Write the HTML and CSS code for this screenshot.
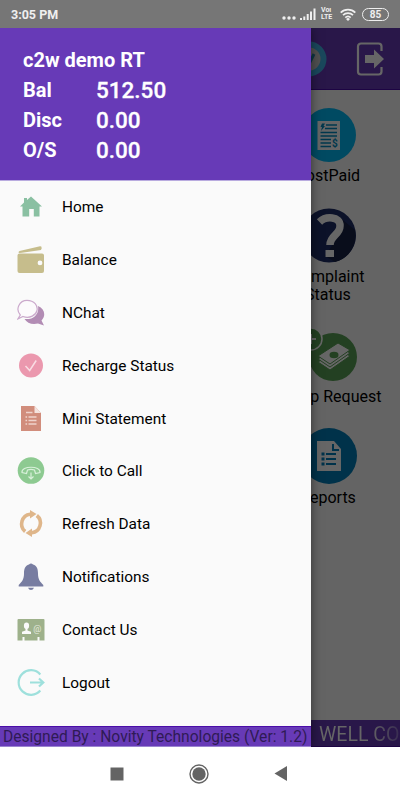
FILE: index.html
```html
<!DOCTYPE html>
<html lang="en">
<head>
    <meta charset="UTF-8">
    <meta name="viewport" content="width=device-width, initial-scale=1.0">
    <title>c2w demo RT</title>
    <link rel="stylesheet" href="styles.css">
</head>
<body>
    <div class="status-bar">
        <span class="time">3:05 PM</span>
        <svg class="dots" width="14" height="4" viewBox="0 0 14 4"><circle cx="2" cy="2" r="1.7"/><circle cx="7" cy="2" r="1.7"/><circle cx="12" cy="2" r="1.7"/></svg>
        <svg class="signal" width="16" height="12" viewBox="0 0 16 12"><path d="M0 10h2v2H0zM3.300 8.500h2V12h-2zM6.700 6h2v6h-2zM10 3.500h2V12h-2zM13.500 0.500h2V12h-2z"/></svg>
        <span class="volte"><span>Voı</span><span>LTE</span></span>
        <svg class="wifi" width="16" height="13" viewBox="0 0 16 13"><g fill="none" stroke="#efefef" stroke-width="1.700"><path d="M.7 4.600a10.500 10.500 0 0 1 14.600 0"/><path d="M3 7.200a7.200 7.200 0 0 1 10 0"/><path d="M5.300 9.600a4 4 0 0 1 5.400 0"/></g><path d="M8 9.700l2 1.400-2 1.900-2-1.900z"/></svg>
        <span class="battery"><b>85</b></span>
    </div>

    <div class="app">
        <div class="toolbar">
            <svg width="36" height="36" viewBox="0 0 36 36"><circle cx="18" cy="18" r="14.500" fill="#c8c8c8" stroke="#42b4e6" stroke-width="6"/><path d="M11 18l6 7 6-12" fill="none" stroke="#2785ae" stroke-width="3"/></svg>
            <svg width="29" height="36" viewBox="0 0 29 36"><path d="M25.500 10V5.500a3 3 0 0 0-3-3H5a3 3 0 0 0-3 3v25a3 3 0 0 0 3 3h17.500a3 3 0 0 0 3-3V26" fill="none" stroke="#fff" stroke-width="2.200"/><path d="M9 14h9V8.500l10 9.500-10 9.500V22H9z" fill="#fff"/></svg>
        </div>

        <div class="tiles">
            <div class="tile postpaid">
                <svg width="54" height="54" viewBox="0 0 54 54"><circle cx="27" cy="27" r="27" fill="#00b8f5"/><path d="M15.500 13H38v29H15.500z" fill="#fff"/><path d="M24 17h11M23 20.500h12M18.500 24.500H35M18.500 28H35M18.500 31.500H29M18.500 35H29M18.500 38.500H29" stroke="#008bc0" stroke-width="1.400"/><path d="M20 15.500h3l-1.500 2.500H23l-4 5 1-4h-1.500z" fill="#008bc0"/><text x="30" y="39" font-size="10" font-weight="700" fill="#008bc0">$</text></svg>
                <span>PostPaid</span>
            </div>
            <div class="tile complaint">
                <svg width="54" height="55" viewBox="0 0 54 55"><circle cx="27" cy="27.500" r="27" fill="#1e2d68"/><path d="M36 8l17 14c3 14-6 29-20 32L23 48l8-12z" fill="#172145"/><path d="M17.500 14c6-6 21-6 20.500 4 0 9-10 9-10 19" fill="none" stroke="#fff" stroke-width="7.500"/><path d="M23.500 42h8.500v7h-8.500z" fill="#fff"/></svg>
                <span>Complaint<br>Status</span>
            </div>
            <div class="tile topup">
                <svg width="62" height="54" viewBox="0 0 62 54"><circle cx="35" cy="30" r="24" fill="#58a055"/><g fill="#fff" stroke="#58a055" stroke-width="1"><path d="M20 35l20-13 12 7-20 14z"/><path d="M20 32l20-13 12 7-20 14z"/><path d="M20 29l20-13 12 7-20 14z"/></g><ellipse cx="36" cy="28" rx="4.500" ry="3.200" fill="#58a055"/><circle cx="13" cy="12" r="11" fill="#58a055" stroke="#fff" stroke-width="1.500"/><path d="M8 12h10M13 7v10" stroke="#fff" stroke-width="2"/></svg>
                <span>Topup Request</span>
            </div>
            <div class="tile reports">
                <svg width="56" height="56" viewBox="0 0 56 56"><circle cx="28" cy="28" r="28" fill="#007db8"/><path d="M16 13h17l7 8v22H16z" fill="#fff"/><path d="M32 16v6h6" fill="none" stroke="#007db8" stroke-width="2"/><path d="M25 26h10M25 31h10M25 36h10" stroke="#007db8" stroke-width="1.800"/><path d="M20.500 26h3M20.500 31h3M20.500 36h3" stroke="#007db8" stroke-width="3"/></svg>
                <span>Reports</span>
            </div>
        </div>

        <div class="ticker">WELL CO</div>
        <div class="scrim"></div>

        <div class="drawer">
            <div class="account">
                <div class="name">c2w demo RT</div>
                <div class="line"><span>Bal</span><b>512.50</b></div>
                <div class="line"><span>Disc</span><b>0.00</b></div>
                <div class="line"><span>O/S</span><b>0.00</b></div>
            </div>
            <ul class="menu">
                <li>
                    <svg viewBox="0 0 28 28"><path d="M14 3.500l11 10h-2.500V23.500h-5.700v-7.500h-4.600v7.500H5.500v-10H3l4-4V5h3v2z" fill="#8ac0a2"/></svg>
                    Home
                </li>
                <li>
                    <svg viewBox="0 0 28 28"><path d="M2.500 7q-2-.5 0-2L23 .3q2-.3 1.600 2L24 4 5 6.700z" fill="#c6bd8c"/><path fill-rule="evenodd" d="M2.500 7.500H25a2 2 0 0 1 2 2v15.500a2 2 0 0 1-2 2H2.500a2 2 0 0 1-2-2V9.500a2 2 0 0 1 2-2zm20.500 7a2.400 2.400 0 1 0 0 4.800 2.400 2.400 0 0 0 0-4.800z" fill="#c6bd8c"/></svg>
                    Balance
                </li>
                <li>
                    <svg viewBox="0 0 28 28"><path d="M21 7c7 3 8 10 3.500 14.500L27 26.500l-6-2c-6 1.500-11-.5-13.500-4.500 9 1 15-5 13.500-13z" fill="#b28cb4"/><path d="M3.300 16C-2 10 2.500 1.300 10 1.300S21 7 20 11.500 13 20 6 17.500L.8 20z" fill="#fcfafc" stroke="#cba9cc" stroke-width="1.200"/></svg>
                    NChat
                </li>
                <li>
                    <svg viewBox="0 0 28 28"><circle cx="14" cy="13.500" r="12" fill="#eb98ae"/><path d="M8.500 14l4.200 4.500 6.500-10" fill="none" stroke="#f9dce3" stroke-width="1.500"/></svg>
                    Recharge Status
                </li>
                <li>
                    <svg viewBox="0 0 28 28"><path d="M4 1h13.500L24 8v18H4z" fill="#d18d7c"/><path d="M17.500 1L24 8h-6.500z" fill="#f4e3df"/><path d="M9 7.500h6.500M11.500 12h8M11.500 15.500h8M11.500 19h8M8.500 12h1.600M8.500 15.500h1.600M8.500 19h1.600" stroke="#efd3cc" stroke-width="1.500"/></svg>
                    Mini Statement
                </li>
                <li>
                    <svg viewBox="0 0 28 28"><circle cx="14" cy="13.500" r="13.300" fill="#8dca91"/><path d="M5 15.500c-1-7 19-7 18 0l-4.500 1-1-3.500c-2-.8-5-.8-7 0l-1 3.500zM14 15.500V22M11.500 19.500L14 22l2.500-2.500" fill="none" stroke="#d8f0da" stroke-width="1.200"/></svg>
                    Click to Call
                </li>
                <li>
                    <svg viewBox="0 0 28 28"><g fill="none" stroke="#dfb68a" stroke-width="3.600"><path d="M8.200 21.500a9.800 9.800 0 0 1 5-17.300"/><path d="M19.800 5.500a9.800 9.800 0 0 1-5 17.300"/></g><path d="M13 0l6.500 4-6.500 4.500zM15 27l-6.500-4 6.500-4.500z" fill="#dfb68a"/></svg>
                    Refresh Data
                </li>
                <li>
                    <svg viewBox="0 0 28 28"><path d="M12 1.500q2-2 4 0c4 1.300 5 4.500 5 9 0 6 2 8 5.300 11.500v1.500H1.700V22C5 18.500 7 16.500 7 10.500c0-4.500 1-7.700 5-9zM11 24.700h6q-1 2.300-3 2.300t-3-2.300z" fill="#787da1"/></svg>
                    Notifications
                </li>
                <li>
                    <svg viewBox="0 0 28 28"><path d="M1.500 3h25a1 1 0 0 1 1 1v20.500h-5V21h-2v3.500h-13V21h-2v3.500h-5V4a1 1 0 0 1 1-1z" fill="#9eb18b"/><ellipse cx="9.500" cy="9.800" rx="2.600" ry="3.300" fill="#fafafa"/><path d="M8.500 12h2v2.500l3.500 1.300V18H5v-2.200l3.500-1.300z" fill="#fafafa"/><text x="16.300" y="16" font-size="9" fill="#e4eadf">@</text></svg>
                    Contact Us
                </li>
                <li>
                    <svg viewBox="0 0 28 28"><path d="M23.300 5.500a12.300 12.300 0 1 0 0 16M13 13.500h13M22 9.500l4.300 4-4.300 4" fill="none" stroke="#9ee0dc" stroke-width="2.200"/></svg>
                    Logout
                </li>
            </ul>
            <div class="credit">Designed By : Novity Technologies (Ver: 1.2)</div>
        </div>
    </div>

    <div class="nav-bar">
        <svg width="14" height="14" viewBox="0 0 14 14"><path d="M.5.500h13v13H.5z"/></svg>
        <svg width="20" height="20" viewBox="0 0 20 20"><circle cx="10" cy="10" r="9" fill="none" stroke="#646464" stroke-width="1.400"/><circle cx="10" cy="10" r="6.700"/></svg>
        <svg width="14" height="15" viewBox="0 0 14 15"><path d="M13 0v15L.5 7.500z"/></svg>
    </div>
</body>
</html>
```
FILE: styles.css
```css
* {
    box-sizing: border-box;
}
body {
    font-family: Roboto, "Liberation Sans", sans-serif;
    margin: 0;
    height: 800px;
    display: flex;
    flex-direction: column;
    overflow: hidden;
    background: #fff;
}
svg {
    display: block;
    flex: none;
}
.status-bar {
    height: 28px;
    padding: 0 11px;
    display: flex;
    align-items: center;
    background: #767676;
    color: #efefef;
    fill: #efefef;
}
.time {
    flex: 1;
    font-size: 12.5px;
    font-weight: 700;
    padding-top: 1px;
}
.dots {
    margin: 7px 4px 0 0;
}
.signal {
    margin-right: 5px;
}
.volte {
    display: flex;
    flex-direction: column;
    width: 13px;
    margin-right: 6px;
    font-size: 7px;
    line-height: 7px;
    font-weight: 700;
}
.wifi {
    margin-right: 6px;
}
.battery {
    width: 27px;
    height: 13px;
    border: 1.5px solid #efefef;
    border-radius: 7px;
    font-size: 10px;
    line-height: 11px;
    text-align: center;
}
.app {
    position: relative;
    height: 719px;
    display: flex;
    flex-direction: column;
    background: #fafafa;
    overflow: hidden;
}
.toolbar {
    height: 62px;
    padding-right: 15px;
    display: flex;
    justify-content: flex-end;
    align-items: center;
    gap: 29px;
    background: #673ab7;
    border-bottom: 1px solid #4a0ca8;
}
.tiles {
    flex: 1;
    width: 142px;
    margin-left: auto;
    padding-top: 18px;
}
.tile {
    width: 142px;
    display: flex;
    flex-direction: column;
    align-items: center;
    font-size: 16px;
    line-height: 18px;
    text-align: center;
    color: #000;
}
.tile span {
    margin-top: 5px;
    padding-right: 2px;
}
.postpaid {
    height: 100px;
}
.complaint {
    height: 119px;
}
.topup {
    height: 101px;
}
.topup span {
    margin-top: 7px;
}
.ticker {
    height: 27px;
    padding-left: 319px;
    background: #673ab7;
    border-bottom: 1px solid #4a0ca8;
    color: transparent;
    background: linear-gradient(90deg, #fff 370px, #8a6ac8 400px) text, #673ab7;
    font-size: 19.5px;
    line-height: 29px;
    white-space: nowrap;
    overflow: hidden;
}
.scrim {
    position: absolute;
    inset: 0;
    background: rgba(0, 0, 0, 0.6);
}
.drawer {
    position: absolute;
    left: 0;
    top: 0;
    bottom: 0;
    width: 311px;
    display: flex;
    flex-direction: column;
    background: #fafafa;
    box-shadow: 0 0 10px rgba(0, 0, 0, 0.5);
}
.account {
    height: 153px;
    padding: 17px 23px 0;
    background: #673ab7;
    color: #fff;
    font-size: 20px;
    font-weight: 700;
    line-height: 30px;
    border-bottom: 1px solid #b9abdf;
}
.line {
    display: flex;
}
.line span {
    width: 73px;
}
.line b {
    font-size: 22.5px;
    font-weight: 500;
    -webkit-text-stroke: 0.3px #fff;
}
.menu {
    flex: 1;
    list-style: none;
    margin: 0;
    padding: 0 0 0 17px;
}
.menu li {
    height: 52.8px;
    display: flex;
    align-items: center;
    gap: 17px;
    font-size: 15.4px;
    color: #000;
}
.menu svg {
    width: 28px;
    height: 28px;
}
.credit {
    height: 21px;
    padding-left: 3px;
    background: #673ab7;
    border-top: 1px solid #4a0ca8;
    border-bottom: 1px solid #9b84d0;
    color: #2f1a55;
    font-size: 15.6px;
    line-height: 21px;
    white-space: nowrap;
}
.nav-bar {
    flex: 1;
    padding-right: 2px;
    display: flex;
    justify-content: center;
    align-items: center;
    gap: 65px;
    fill: #646464;
}
```
